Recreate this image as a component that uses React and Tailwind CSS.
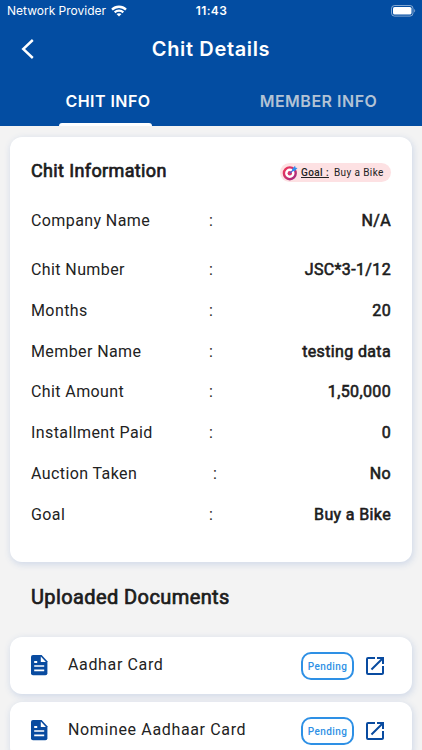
import React from 'react';
import { MdOpenInNew } from 'react-icons/md';

const details = [
  { label: 'Company Name', value: 'N/A', height: 'h-[49px]' },
  { label: 'Chit Number', value: 'JSC*3-1/12', height: 'h-[41px]' },
  { label: 'Months', value: '20', height: 'h-[41px]' },
  { label: 'Member Name', value: 'testing data', height: 'h-[40px]' },
  { label: 'Chit Amount', value: '1,50,000', height: 'h-[41px]' },
  { label: 'Installment Paid', value: '0', height: 'h-[41px]' },
  { label: 'Auction Taken', value: 'No', height: 'h-[41px]', colon: 'pl-[4px]' },
  { label: 'Goal', value: 'Buy a Bike', height: 'h-[40px]' },
];

const documents = ['Aadhar Card', 'Nominee Aadhaar Card'];

const WifiIcon = () => (
  <svg width="16" height="12" viewBox="0 0 16 12" fill="none" stroke="#fff" strokeWidth="2.3">
    <path d="M1 4.6C4.9.8 11.1.8 15 4.6" />
    <path d="M3.7 7.3c2.4-2.3 6.2-2.3 8.6 0" />
    <path d="M8 11.6 5.5 9.1c1.4-1.3 3.6-1.3 5 0z" fill="#fff" stroke="none" />
  </svg>
);

const BatteryIcon = () => (
  <svg width="25" height="12" viewBox="0 0 25 12">
    <rect x=".5" y=".5" width="21.5" height="10.6" rx="3" fill="none" stroke="#fff" strokeOpacity=".5" />
    <rect x="2" y="2" width="18.5" height="7.6" rx="1.6" fill="#fff" />
    <path d="M23.2 4v3.6c1.3-.6 1.3-3 0-3.6z" fill="#fff" fillOpacity=".5" />
  </svg>
);

const TargetIcon = () => (
  <svg width="16" height="16" viewBox="0 0 16 16" fill="none">
    <defs>
      <linearGradient id="ring" x1="0" y1="0" x2="1" y2="1">
        <stop offset="0" stopColor="#f0365a" />
        <stop offset="1" stopColor="#a32a80" />
      </linearGradient>
    </defs>
    <circle cx="7.8" cy="8.3" r="5.9" fill="#fff" stroke="url(#ring)" strokeWidth="2.4" />
    <circle cx="7.8" cy="8.3" r="2.2" fill="#e0306a" />
    <path d="m7.8 8.3 4.4-4.2" stroke="#4a62c8" strokeWidth="1.2" />
    <path d="m10.2 3.9 2.9-3.1.4 1.9 2 .4-2.8 3-2.3.1z" fill="#2e8df0" />
  </svg>
);

const DocumentIcon = () => (
  <svg width="17" height="21" viewBox="0 0 17 21">
    <path d="M2 0h8.6L16.4 6.2V18.3a2 2 0 0 1-2 2H2a2 2 0 0 1-2-2V2a2 2 0 0 1 2-2z" fill="#094ba0" />
    <path d="M9.8 1.6v5.3h5.1zM3.2 6h3v2h-3zM3.2 10.2h10v1.6h-10zM3.2 14.6h10v1.6h-10z" fill="#fff" />
  </svg>
);

const DocumentCard = ({ name }) => (
  <div className="flex h-[57px] items-center rounded-[12px] bg-white pl-[21px] pr-[25px] shadow-[1px_2px_6px_1px_#d3dbe9]">
    <DocumentIcon />
    <span className="ml-[20px] flex-1 pb-[1px] text-[16px] tracking-[0.64px] text-[#222]">{name}</span>
    <span className="flex h-[28px] w-[53px] items-center justify-center rounded-[10px] border-2 border-[#2e90e5] pt-[1px] text-[10px] font-medium tracking-[0.4px] text-[#2e90e5]">
      Pending
    </span>
    <MdOpenInNew className="ml-[9px] text-[#094ba0]" size={24} />
  </div>
);

const App = () => {
  return (
    <div className="h-[750px] w-[422px] overflow-hidden bg-[#f3f3f3] font-['Roboto',sans-serif]">
      <header className="h-[126px] bg-[#034da2] font-['Inter',sans-serif] text-white">
        <div className="grid h-[22px] grid-cols-3 items-center pl-[7px] pr-[6px]">
          <div className="flex items-center gap-[5px]">
            <span className="whitespace-nowrap text-[12px]">Network Provider</span>
            <WifiIcon />
          </div>
          <span className="text-center text-[12px] font-semibold tracking-[0.4px]">11:43</span>
          <div className="flex justify-end">
            <BatteryIcon />
          </div>
        </div>

        <div className="grid h-[54px] grid-cols-[60px_1fr_60px] items-center">
          <svg className="ml-[21px]" width="13" height="20" viewBox="0 0 13 20" fill="none" stroke="#fff" strokeWidth="2.4">
            <path d="M11.8 1 2.2 10l9.6 9" />
          </svg>
          <h1 className="text-center text-[20px] font-semibold tracking-[0.65px]">Chit Details</h1>
        </div>

        <div className="flex h-[50px]">
          <div className="flex w-[211px] flex-col items-center justify-between pt-[13px]">
            <span className="pl-[5px] text-[16px] font-semibold leading-[24px] tracking-[0.45px]">CHIT INFO</span>
            <span className="h-[3px] w-[93px] rounded-t-[3px] bg-white" />
          </div>
          <div className="w-[211px] pl-[4px] pt-[13px] text-center text-[16px] font-semibold leading-[24px] tracking-[0.5px] text-[#b3c3d5]">
            MEMBER INFO
          </div>
        </div>
      </header>

      <main className="px-[10px] pt-[11px]">
        <section className="h-[425px] w-[402px] rounded-[12px] bg-white px-[21px] pt-[20px] shadow-[1px_2px_6px_1px_#d3dbe9]">
          <div className="flex h-[35px] items-start justify-between">
            <h2 className="text-[18px] leading-[27px] tracking-[0.37px] text-[#1c1c1c] [-webkit-text-stroke:0.7px]">Chit Information</h2>
            <div className="mt-[6px] flex h-[19px] w-[111px] items-center rounded-full bg-[#fde1e3] pl-[2px] text-[10px] text-[#222]">
              <TargetIcon />
              <span className="ml-[3px] whitespace-pre font-medium tracking-[0.4px] underline">Goal :</span>
              <span className="ml-[5px] whitespace-nowrap tracking-[0.4px]">Buy a Bike</span>
            </div>
          </div>

          {details.map((row) => (
            <div key={row.label} className={`flex items-start ${row.height} text-[16px] leading-[57px]`}>
              <span className="w-[178px] tracking-[0.4px] text-[#222]">{row.label}</span>
              <span className={`text-[#222] ${row.colon || ''}`}>:</span>
              <span className="flex-1 text-right tracking-[0.36px] text-[#1c1c1c] [-webkit-text-stroke:0.6px]">{row.value}</span>
            </div>
          ))}
        </section>

        <h2 className="ml-[21px] mt-[21px] text-[20px] leading-[28px] tracking-[0.4px] text-[#1c1c1c] [-webkit-text-stroke:0.7px]">Uploaded Documents</h2>

        <div className="mt-[26px] flex w-[402px] flex-col gap-[8px]">
          {documents.map((name) => (
            <DocumentCard key={name} name={name} />
          ))}
        </div>
      </main>
    </div>
  );
};

export default App;
